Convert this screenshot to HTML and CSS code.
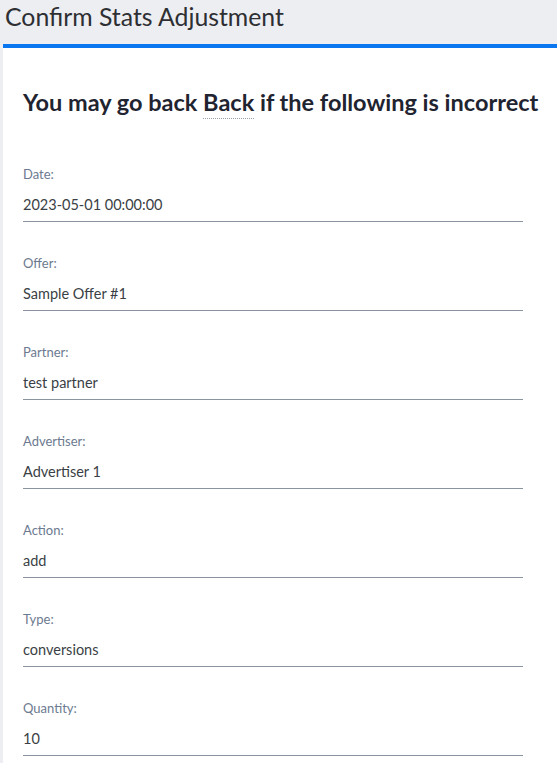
FILE: index.html
```html
<!DOCTYPE html>
<html lang="en">
<head>
<meta charset="utf-8">
<title>Confirm Stats Adjustment</title>
<link rel="stylesheet" href="styles.css">
</head>
<body>
<header class="page-header">
  <h1 class="page-title">Confirm Stats Adjustment</h1>
</header>
<main class="card">
  <h2 class="card-heading">You may go back <span class="back-link">Back</span> if the following is incorrect</h2>
  <div class="fields">
    <div class="field">
      <div class="field-label">Date:</div>
      <div class="field-value">2023-05-01 00:00:00</div>
    </div>
    <div class="field">
      <div class="field-label">Offer:</div>
      <div class="field-value">Sample Offer #1</div>
    </div>
    <div class="field">
      <div class="field-label">Partner:</div>
      <div class="field-value">test partner</div>
    </div>
    <div class="field">
      <div class="field-label">Advertiser:</div>
      <div class="field-value">Advertiser 1</div>
    </div>
    <div class="field">
      <div class="field-label">Action:</div>
      <div class="field-value">add</div>
    </div>
    <div class="field">
      <div class="field-label">Type:</div>
      <div class="field-value">conversions</div>
    </div>
    <div class="field">
      <div class="field-label">Quantity:</div>
      <div class="field-value">10</div>
    </div>
  </div>
</main>
</body>
</html>
```
FILE: styles.css
```css
html, body {
  margin: 0;
  padding: 0;
}
body {
  background: #eceef1;
  font-family: "Lato", "Noto Sans", sans-serif;
  color: #333;
  overflow: hidden;
  height: 763px;
}
.page-header {
  height: 44px;
  padding-left: 5px;
  display: flex;
  align-items: center;
}
.page-title {
  margin: 0;
  font-size: 24.8px;
  font-weight: 400;
  line-height: 30px;
  color: #2e2f33;
  position: relative;
  top: -5px;
}
.card {
  display: block;
  margin-left: 3px;
  background: #fff;
  border-top: 4px solid #0a76f0;
  padding: 40px 20px 40px 20px;
  min-height: 800px;
}
.card-heading {
  margin: 0 0 49px 0;
  font-size: 23.5px;
  line-height: 28px;
  font-weight: 700;
  color: #1f2430;
  white-space: nowrap;
}
.back-link {
  border-bottom: 1px dotted #9aa0a8;
  padding-bottom: 2px;
}
.fields {
  display: flex;
  flex-direction: column;
  gap: 32px;
  width: 500px;
}
.field-label {
  font-size: 13px;
  line-height: 18px;
  color: #6c7a90;
  margin-bottom: 12px;
}
.field-value {
  font-size: 14.5px;
  line-height: 20px;
  color: #3a3f45;
  padding-bottom: 6px;
  border-bottom: 1px solid #8a94a0;
}
```
